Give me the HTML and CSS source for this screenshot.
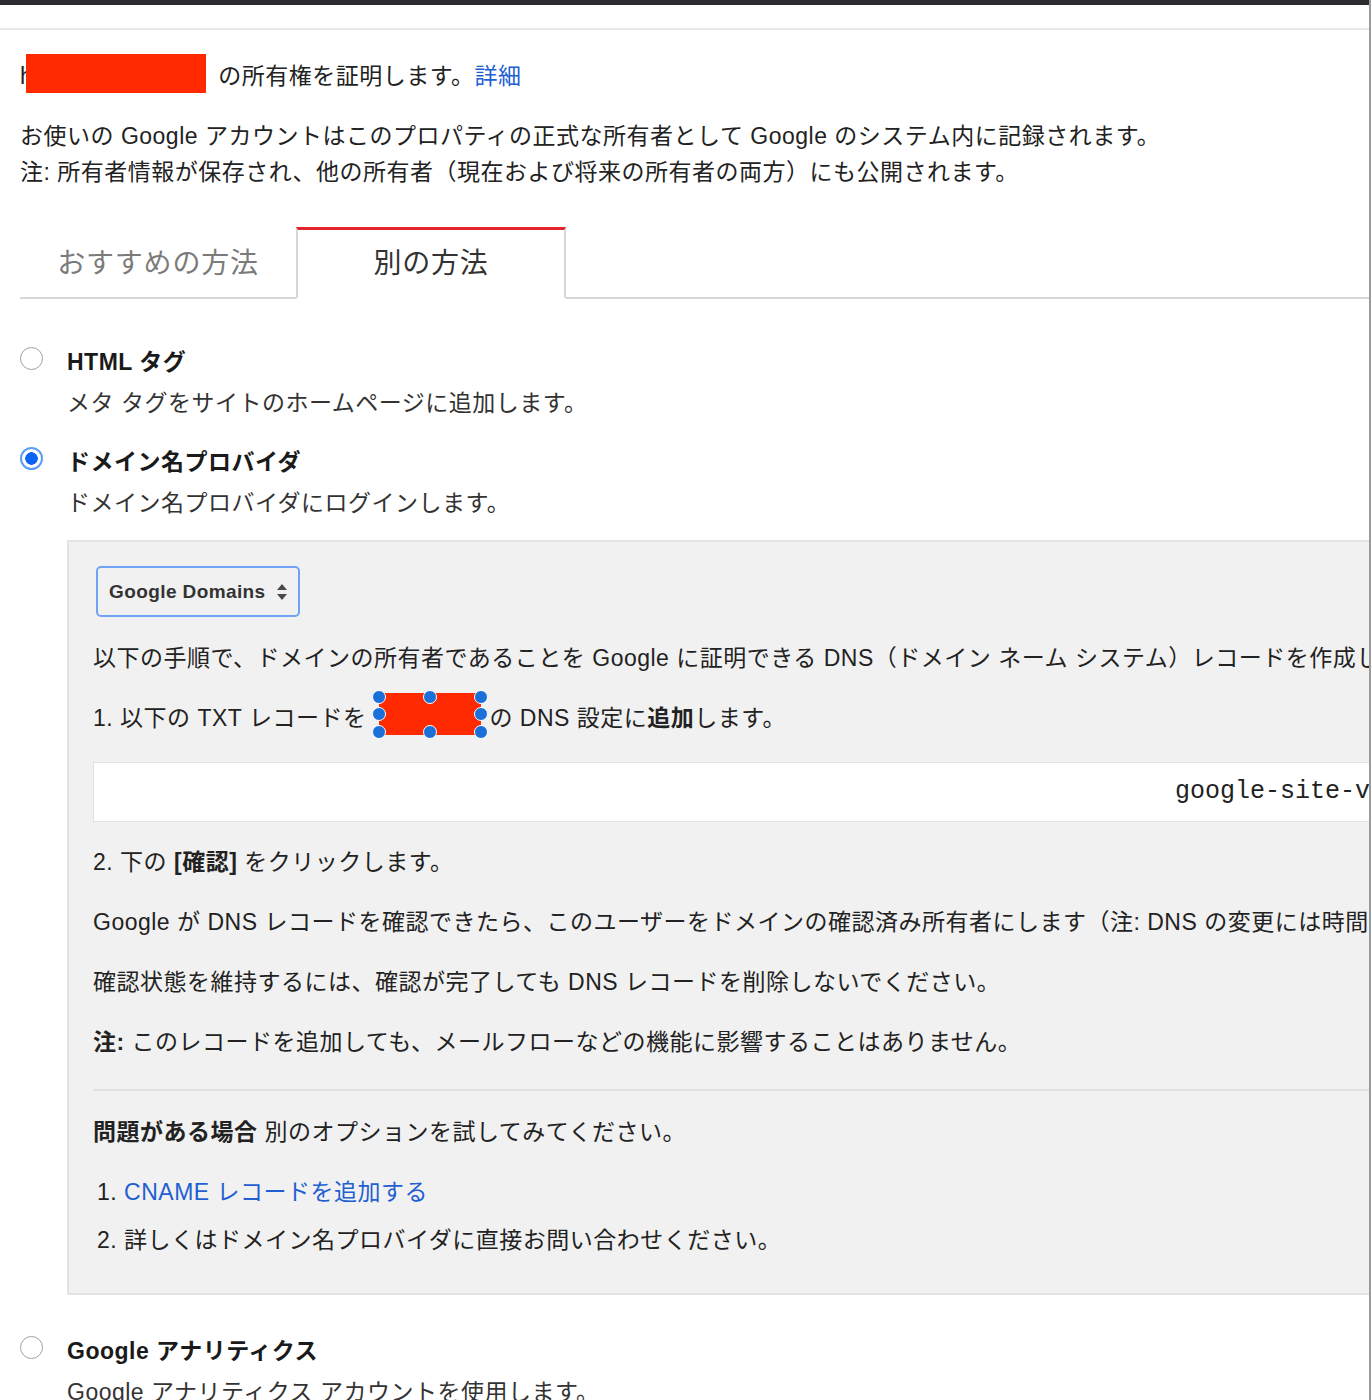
FILE: index.html
```html
<!DOCTYPE html>
<html lang="ja">
<head>
<meta charset="utf-8">
<title>所有権の確認</title>
<link rel="stylesheet" href="styles.css">
</head>
<body>
<div class="page">
  <div class="topbar"></div>
  <div class="subbar"></div>
  <main class="content">
    <p class="claim"><span class="url-start">h</span><span class="redact redact-title"></span> の所有権を証明します。<a class="link" href="#">詳細</a></p>
    <p class="note">お使いの Google アカウントはこのプロパティの正式な所有者として Google のシステム内に記録されます。<br>注: 所有者情報が保存され、他の所有者（現在および将来の所有者の両方）にも公開されます。</p>

    <div class="tabs">
      <div class="tab">おすすめの方法</div>
      <div class="tab active">別の方法</div>
      <div class="tab-rest"></div>
    </div>

    <div class="options">
      <div class="option">
        <span class="radio"></span>
        <div class="option-body">
          <div class="option-title">HTML タグ</div>
          <div class="option-desc">メタ タグをサイトのホームページに追加します。</div>
        </div>
      </div>

      <div class="option">
        <span class="radio checked"></span>
        <div class="option-body">
          <div class="option-title">ドメイン名プロバイダ</div>
          <div class="option-desc">ドメイン名プロバイダにログインします。</div>

          <div class="panel">
            <div class="select">
              <span>Google Domains</span>
              <svg class="select-arrows" width="12" height="18" viewBox="0 0 12 18"><path d="M6 1 L11 7 L1 7 Z M1 11 L11 11 L6 17 Z" fill="#4a4a4a"/></svg>
            </div>
            <p class="intro">以下の手順で、ドメインの所有者であることを Google に証明できる DNS（ドメイン ネーム システム）レコードを作成します。</p>
            <p class="step">1. 以下の TXT レコードを<span class="redact redact-inline"><i class="h h1"></i><i class="h h2"></i><i class="h h3"></i><i class="h h4"></i><i class="h h5"></i><i class="h h6"></i><i class="h h7"></i><i class="h h8"></i></span>の DNS 設定に<b>追加</b>します。</p>
            <div class="record">google-site-verification=Xq7mP2vKc9LrT4nYh8WzB3dFs6JuG1aEoN5iQ0Rl</div>
            <p class="step2">2. 下の <b>[確認]</b> をクリックします。</p>
            <p class="gap">Google が DNS レコードを確認できたら、このユーザーをドメインの確認済み所有者にします（注: DNS の変更には時間がかかる場合があります）。</p>
            <p class="gap">確認状態を維持するには、確認が完了しても DNS レコードを削除しないでください。</p>
            <p class="gap"><b>注:</b> このレコードを追加しても、メールフローなどの機能に影響することはありません。</p>
            <div class="divider"></div>
            <p class="trouble"><b>問題がある場合</b> 別のオプションを試してみてください。</p>
            <div class="alt alt-first">1. <a class="link" href="#">CNAME レコードを追加する</a></div>
            <div class="alt alt-second">2. 詳しくはドメイン名プロバイダに直接お問い合わせください。</div>
          </div>
        </div>
      </div>

      <div class="option">
        <span class="radio"></span>
        <div class="option-body">
          <div class="option-title">Google アナリティクス</div>
          <div class="option-desc">Google アナリティクス アカウントを使用します。</div>
        </div>
      </div>
    </div>
  </main>
</div>
</body>
</html>
```

FILE: styles.css
```css
* { box-sizing: border-box; }

html, body {
  margin: 0;
  background: #ffffff;
}

body {
  font-family: "Liberation Sans", "Noto Sans CJK JP", sans-serif;
  font-size: 23px;
  letter-spacing: 0.5px;
  color: #222222;
}

.page {
  width: 1371px;
  height: 1400px;
  overflow: hidden;
  border-right: 2px solid #9b9b9b;
}

.topbar {
  height: 5px;
  background: #2b2b30;
}

.subbar {
  height: 25px;
  border-bottom: 2px solid #e9e9e9;
}

.content {
  padding: 28px 0 0 20px;
}

.claim {
  margin: 0;
  line-height: 36px;
  white-space: nowrap;
}

.redact {
  display: inline-block;
  background: #ff2a00;
  vertical-align: top;
}

.redact-title {
  width: 180px;
  height: 39px;
  margin: -4px 5px 0 -7px;
}

.link {
  color: #1f5fd1;
  text-decoration: none;
}

.note {
  margin: 24px 0 0;
  line-height: 36px;
  white-space: nowrap;
}

/* tabs */
.tabs {
  margin-top: 37px;
  display: flex;
  align-items: flex-end;
}

.tab {
  width: 276px;
  height: 70px;
  border-bottom: 2px solid #d7d7d7;
  display: flex;
  align-items: center;
  justify-content: center;
  padding-bottom: 4px;
  font-size: 28px;
  letter-spacing: 0.8px;
  color: #7b7b7b;
}

.tab.active {
  width: 270px;
  height: 72px;
  border: 2px solid #d7d7d7;
  border-top: 3px solid #e3262b;
  border-bottom: 2px solid #ffffff;
  padding-bottom: 5px;
  color: #333333;
}

.tab-rest {
  flex: 1;
  height: 2px;
  background: #d7d7d7;
}

/* options */
.options {
  margin-top: 43px;
}

.option {
  display: flex;
  gap: 24px;
}

.option + .option {
  margin-top: 18px;
}

.radio {
  flex: none;
  width: 23px;
  height: 23px;
  margin-top: 5px;
  border-radius: 50%;
  border: 1.5px solid #a0a0a0;
  background: #ffffff;
}

.radio.checked {
  border: 2px solid #5c9bf6;
  background: radial-gradient(circle, #0b64f4 0 6px, #ffffff 6.5px);
}

.option-body {
  flex: 1;
  min-width: 0;
}

.option-title {
  font-weight: bold;
  line-height: 40px;
  color: #1a1a1a;
}

.option-desc {
  line-height: 42px;
  color: #333333;
}

/* panel */
.panel {
  width: 1500px;
  margin: 16px 0 18px;
  padding: 24px 0 35px 24px;
  background: #f1f1f1;
  border: 2px solid #e3e3e3;
}

.select {
  width: 204px;
  height: 51px;
  margin-left: 3px;
  display: flex;
  align-items: center;
  padding: 0 10px 0 11px;
  border: 2px solid #70a3f5;
  border-radius: 5px;
  font-size: 19px;
  font-weight: bold;
  letter-spacing: 0.4px;
  color: #333333;
}

.select-arrows {
  margin-left: auto;
}

.panel p {
  margin: 0;
  line-height: 36px;
  white-space: nowrap;
}

.panel .intro { margin-top: 23px; }
.panel .step { margin-top: 24px; }
.panel .step2 { margin-top: 22px; }
.panel .gap { margin-top: 24px; }
.panel .trouble { margin-top: 23px; }

.redact-inline {
  position: relative;
  width: 102px;
  height: 42px;
  margin: -7px 8px 0 13px;
}

.h {
  position: absolute;
  width: 14px;
  height: 14px;
  margin: -7px 0 0 -7px;
  border-radius: 50%;
  background: #1b6fd8;
  border: 1px solid #ffffff;
}

.h1 { left: 0; top: 4px; }
.h2 { left: 51px; top: 4px; }
.h3 { left: 102px; top: 4px; }
.h4 { left: 0; top: 21px; }
.h5 { left: 102px; top: 21px; }
.h6 { left: 0; top: 39px; }
.h7 { left: 51px; top: 39px; }
.h8 { left: 102px; top: 39px; }

.record {
  margin-top: 26px;
  height: 60px;
  background: #ffffff;
  border: 1px solid #e2e2e2;
  padding-left: 1081px;
  font-family: "Liberation Mono", monospace;
  font-size: 25px;
  letter-spacing: 0;
  line-height: 58px;
  white-space: nowrap;
  color: #222222;
}

.divider {
  margin-top: 29px;
  height: 2px;
  background: #e1e1e1;
}

.alt {
  padding-left: 4px;
  line-height: 36px;
  white-space: nowrap;
}

.alt-first { margin-top: 24px; }
.alt-second { margin-top: 12px; }
```
